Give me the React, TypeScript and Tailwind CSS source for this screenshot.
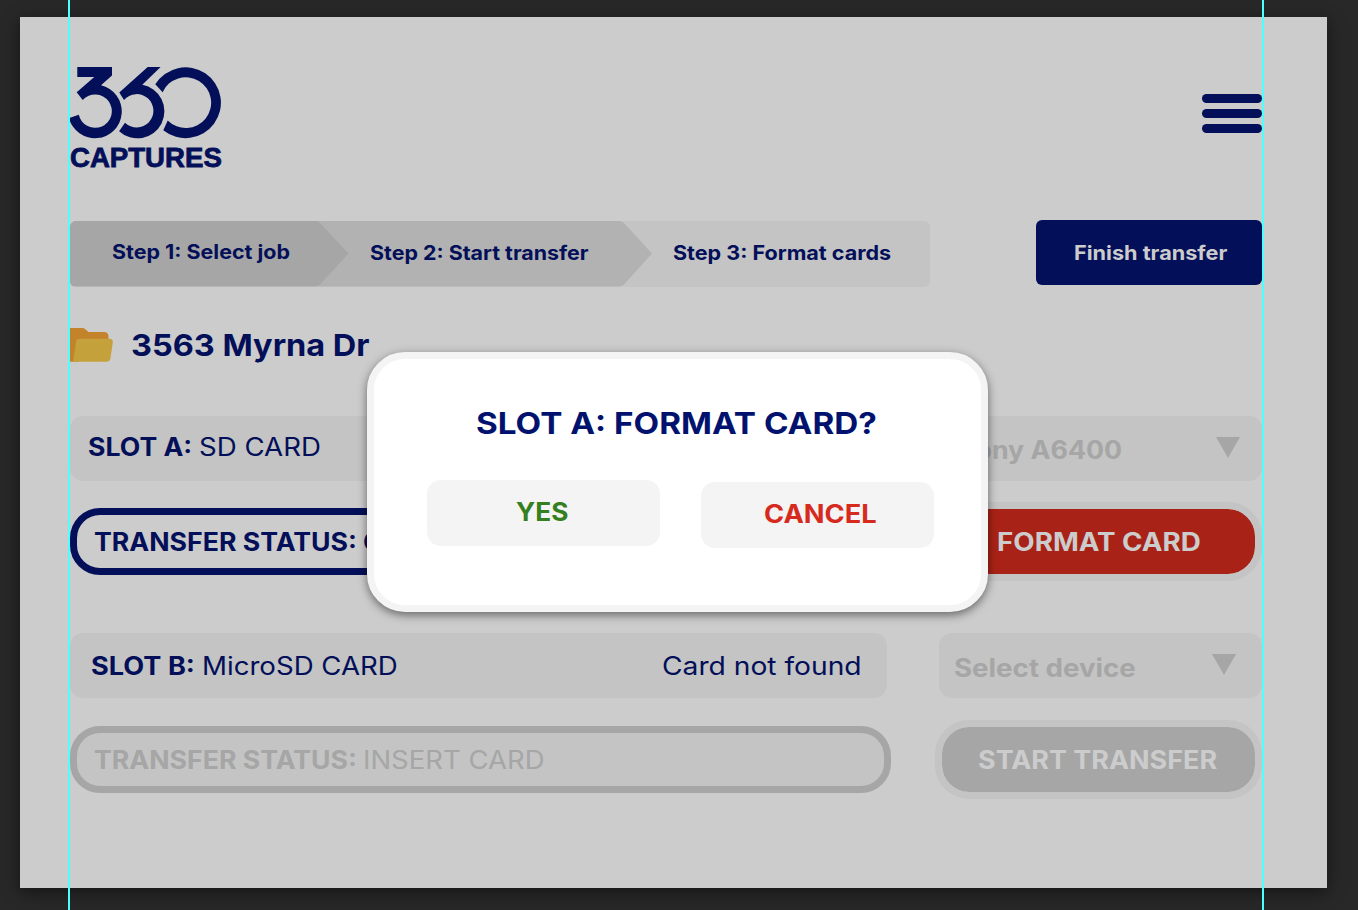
import type { ReactNode } from "react";

type LabelProps = { box?: string; text: string; children: ReactNode };

/** A single line of text, widened horizontally inside a fixed-width box. */
function Label({ box = "", text, children }: LabelProps) {
  return (
    <span className={`block shrink-0 text-left whitespace-nowrap ${box}`}>
      <span className={`inline-block origin-left align-top ${text}`}>{children}</span>
    </span>
  );
}

function Logo() {
  return (
    <div className="w-[152px] text-[#030f58]">
      <svg viewBox="70 66 152 73" className="block h-[73px] w-[152px]" fill="currentColor">
        <path d="M77.3 67H112V75.5L101 85.3A26.8 26.8 0 1 1 69 118L78.8 114.7A16.7 16.7 0 1 0 82.7 100L76.7 92.3 94.3 76.9H77.3Z" />
        <path d="M147.7 67H160.6L142.3 84.8A27 27 0 1 1 119.1 131.2L125 122.7A16.7 16.7 0 1 0 124 100L119.3 92.5Z" />
        <path d="M155.3 84.3A35.4 35.4 0 1 1 163.3 130.3L167.7 120.5A25.4 25.4 0 1 0 162.6 92.2Z" />
      </svg>
      <Label
        box="mt-[4px] h-[30px] w-[153px] font-['Liberation_Sans',sans-serif] leading-[30px]"
        text="scale-x-[1.022] text-[27px] font-bold [-webkit-text-stroke:0.8px_#030f58]"
      >
        CAPTURES
      </Label>
    </div>
  );
}

function MenuIcon() {
  return (
    <div className="mt-[28px] flex h-[39px] w-[60px] flex-col justify-between">
      <div className="h-[9px] rounded-full bg-[#030f58]" />
      <div className="h-[9px] rounded-full bg-[#030f58]" />
      <div className="h-[9px] rounded-full bg-[#030f58]" />
    </div>
  );
}

function Steps() {
  return (
    <div className="mt-px grid h-[65.5px] w-[860px] overflow-hidden rounded-[6px] bg-[#c4c4c4]">
      <svg viewBox="0 0 860 65.5" className="col-start-1 row-start-1 h-[65.5px] w-[860px]">
        <path d="M0 0H549Q552 0 554 2L582 32.5 554 63.5Q552 65.5 549 65.5H0Z" fill="#b2b2b2" />
        <path d="M0 0H245Q248 0 250 2L278.5 32.5 250 63.5Q248 65.2 245 65.2H0Z" fill="#a6a6a6" />
      </svg>
      <div className="col-start-1 row-start-1 flex items-center pl-[41.5px] text-[20px] leading-[30px] font-bold">
        <Label box="w-[258px] pb-[3px]" text="scale-x-[1.072]">Step 1: Select job</Label>
        <Label box="w-[303px] pb-[1px]" text="scale-x-[1.07]">Step 2: Start transfer</Label>
        <Label box="w-[220px] pb-[1px]" text="scale-x-[1.077]">Step 3: Format cards</Label>
      </div>
    </div>
  );
}

function Folder() {
  return (
    <svg viewBox="0 0 44 34" className="h-[34px] w-[44px] shrink-0">
      <path d="M0 0H12.5Q14 0 15 1L18.500 4H34Q38.500 4 38.500 9V16L8 33.800H0Z" fill="#c3832b" />
      <path d="M9.500 10.800H39.500Q43.200 10.800 42.800 14.500L40.500 30Q40 33.800 36.500 33.800H3L6 14Q6.500 10.800 9.500 10.800Z" fill="#c4a13b" />
    </svg>
  );
}

function Triangle() {
  return (
    <svg viewBox="0 0 24 21" className="mb-[2px] h-[21px] w-[24px] shrink-0">
      <path d="M0 0H24L12 21Z" fill="#a6a6a6" />
    </svg>
  );
}

function Guide({ place }: { place: string }) {
  return <div className={`absolute inset-y-0 w-[2px] bg-[#4dffff] ${place}`} />;
}

function ConfirmDialog() {
  return (
    <div className="absolute top-[352px] left-[367px] h-[260px] w-[621px] rounded-[38px] border-[7px] border-[#f4f4f4] bg-white shadow-[0_3px_10px_rgba(0,0,0,0.5)]">
      <Label
        box="mt-[44px] ml-[102px] w-[404px] text-[#00126e]"
        text="scale-x-[1.09] text-[30.5px] leading-[40px] font-bold"
      >
        SLOT A: FORMAT CARD?
      </Label>
      <div className="mt-[37px] ml-[53px] flex gap-[41px] text-[25px] leading-[30px] font-bold">
        <button className="flex h-[65.5px] w-[233px] items-center rounded-[14px] bg-[#f4f4f4] pl-[89px] text-[#347f1e]">
          <Label box="w-[53px] pb-[1px]" text="scale-x-[1.05]">YES</Label>
        </button>
        <button className="mt-[2px] flex h-[65.5px] w-[233px] items-center rounded-[14px] bg-[#f4f4f4] pl-[62.500px] text-[#d62a1f]">
          <Label box="w-[114px] pb-[1px]" text="scale-x-[1.09]">CANCEL</Label>
        </button>
      </div>
    </div>
  );
}

export default function App() {
  return (
    <div className="relative h-[910px] w-[1358px] overflow-hidden bg-[#282828] pt-[17px] pl-[20px] font-['Inter',sans-serif]">
      <main className="h-[871px] w-[1307px] bg-[#ccc] pt-[49px] pr-[65px] pl-[50px] text-[#030f58] shadow-[0_4px_16px_rgba(0,0,0,0.5)]">
        <header className="flex h-[154px] items-start justify-between">
          <Logo />
          <MenuIcon />
        </header>

        <div className="flex justify-between">
          <Steps />
          <button className="flex h-[65px] w-[226px] items-center rounded-[6px] bg-[#030f58] pl-[37.500px] text-[20px] leading-[30px] font-bold text-[#ccc]">
            <Label box="w-[155px] pt-px" text="scale-x-[1.083]">Finish transfer</Label>
          </button>
        </div>

        <div className="mt-[41px] flex h-[34px] items-center">
          <Folder />
          <Label box="ml-[17px] w-[240px] pt-px" text="scale-x-[1.065] text-[30.5px] leading-[34px] font-bold">
            3563 Myrna Dr
          </Label>
        </div>

        <section className="mt-[54px] grid grid-cols-[821px_327px] gap-x-[44px] text-[25px] leading-[30px]">
          <div className="flex h-[65.5px] w-[817px] items-center rounded-[13px] bg-[#c4c4c4] pb-[2px] pl-[17.500px]">
            <Label box="w-[111.500px]" text="scale-x-[1.065] font-bold">SLOT A:</Label>
            <Label box="w-[125px]" text="scale-x-[1.105] font-normal">SD CARD</Label>
          </div>
          <div className="ml-[4px] flex h-[65.5px] items-center rounded-[13px] bg-[#c4c4c4] pl-[19px] text-[#a6a6a6]">
            <Label box="w-[258px] pt-[4px]" text="scale-x-[1.07] font-bold">Sony A6400</Label>
            <Triangle />
          </div>
          <div className="mt-[26.500px] flex h-[67.500px] items-center rounded-[30px] border-[7px] border-[#030f58] pt-[2px] pl-[16.500px]">
            <Label box="w-[269.500px]" text="scale-x-[1.067] font-bold">TRANSFER STATUS:</Label>
            <Label box="w-[110px]" text="scale-x-[1.105] font-bold">COMPLETE</Label>
          </div>
          <button className="mt-[20.500px] flex h-[79px] items-center rounded-[34px] border-[7px] border-[#c4c4c4] bg-[#a92217] bg-clip-padding pt-[2px] pl-[55px] text-[#ccc]">
            <Label box="w-[206px]" text="scale-x-[1.11] font-bold">FORMAT CARD</Label>
          </button>
        </section>

        <section className="mt-[52px] grid grid-cols-[821px_327px] gap-x-[44px] text-[25px] leading-[30px]">
          <div className="flex h-[65.5px] w-[817px] items-center rounded-[13px] bg-[#c4c4c4] pt-[2px] pl-[20.500px]">
            <Label box="w-[111px]" text="scale-x-[1.085] font-bold">SLOT B:</Label>
            <Label box="w-[460px]" text="scale-x-[1.105] font-normal">MicroSD CARD</Label>
            <Label box="w-[202px]" text="scale-x-[1.128] font-normal">Card not found</Label>
          </div>
          <div className="ml-[4px] flex h-[65.5px] items-center rounded-[13px] bg-[#c4c4c4] pl-[14.500px] text-[#a6a6a6]">
            <Label box="w-[258px] pt-[5px]" text="scale-x-[1.107] font-bold">Select device</Label>
            <Triangle />
          </div>
          <div className="mt-[27.500px] flex h-[67.500px] items-center rounded-[30px] border-[7px] border-[#a6a6a6] bg-[#c4c4c4] pt-[2px] pl-[16.500px] text-[#a6a6a6]">
            <Label box="w-[269.500px]" text="scale-x-[1.067] font-bold">TRANSFER STATUS:</Label>
            <Label box="w-[185px]" text="scale-x-[1.1] font-normal">INSERT CARD</Label>
          </div>
          <button className="mt-[22px] flex h-[79px] items-center rounded-[34px] border-[7px] border-[#c4c4c4] bg-[#a6a6a6] bg-clip-padding pt-[1px] pl-[36px] text-[#ccc]">
            <Label box="w-[242px]" text="scale-x-[1.077] font-bold">START TRANSFER</Label>
          </button>
        </section>
      </main>

      <Guide place="left-[68px]" />
      <Guide place="left-[1262px]" />
      <ConfirmDialog />
    </div>
  );
}
